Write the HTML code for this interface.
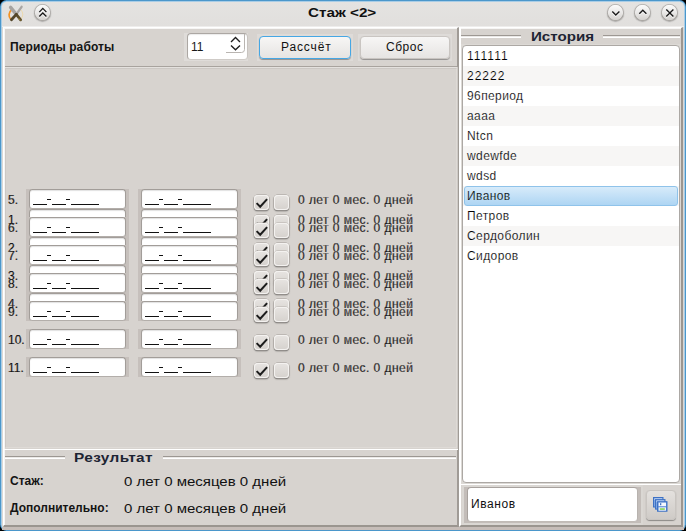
<!DOCTYPE html>
<html><head><meta charset="utf-8">
<style>
*{margin:0;padding:0;box-sizing:border-box}
html,body{width:686px;height:531px;overflow:hidden;background:#000}
body{position:relative;font-family:"Liberation Sans",sans-serif;font-size:12px;color:#111}
.a{position:absolute}
.t{position:absolute;white-space:nowrap;line-height:1}
#w0{left:0;top:0;width:686px;height:531px;border-radius:6.5px;background:#4b97cb}
#w1{left:1px;top:1px;width:684px;height:529px;border-radius:5.5px;background:#a9cde6}
#w2{left:2px;top:2px;width:682px;height:528px;border-radius:4.5px;background:linear-gradient(#e4e3e1,#e1dfdd 24px,#eeedec 24px,#eeedec 25px,#dcd8d4 25px)}
#wb{left:2px;top:527px;width:682px;height:3px;background:#c6bdb8}
.btnc{position:absolute;width:17px;height:17px;border-radius:50%;background:linear-gradient(#fdfdfd,#ecebea 45%,#d2cfcc);box-shadow:inset 0 0 0 0.8px rgba(110,105,100,.55),0 0.8px 1.2px rgba(0,0,0,.3)}
.btnc svg{position:absolute;left:0;top:0}
/* panels */
#lp{left:3px;top:27px;width:456px;height:500px;background:#d7d3cf;border-left:1px solid #fff;border-top:1px solid #fff;border-right:2px solid #a09b96;border-bottom:2px solid #9a958f;box-shadow:inset 1px 1px 0 #f6f5f4}
#rp{left:459px;top:27px;width:224px;height:500px;background:#d7d3cf;border-left:2px solid #fff;border-top:1px solid #fff;border-right:2px solid #9c9690;border-bottom:2px solid #9a958f;box-shadow:inset 0 1px 0 #f6f5f4}
.bold{font-weight:bold;color:#141414}
.dv{transform-origin:0 0}
.navy{color:#1d2433}
.pbtn{position:absolute;border-radius:4px;background:linear-gradient(#f7f6f5,#e6e4e2);box-shadow:0 1px 1px rgba(0,0,0,.35);border:1px solid #c9c5c1}
.fr{position:absolute;background:#c6c0bc}
.fld{position:absolute;background:#fff;border-radius:3.5px;border:1px solid #a29d99;border-bottom-color:#b3aeaa;box-shadow:inset 0 1px 1px rgba(0,0,0,.12)}
.cb{position:absolute;width:15px;height:15px;border-radius:4px;background:linear-gradient(#e7e4e1,#d5d1cd);box-shadow:inset 0 0 0 1px #f4f2f0,0 0 0 0.5px #b5b0ab,0 1px 1.5px rgba(0,0,0,.4)}
.cb svg{position:absolute;left:0;top:0}
.row .t{font-size:12px}
</style></head><body>
<div id="w0" class="a"></div>
<div id="w1" class="a"></div>
<div id="w2" class="a"></div>
<div id="wb" class="a"></div>

<!-- title bar -->
<svg class="a" style="left:4px;top:2px" width="24" height="22" viewBox="0 0 24 22">
  <path d="M7.4 8 A6.3 6.3 0 0 0 6.6 17" stroke="#f5880c" stroke-width="1.7" fill="none" opacity=".9"/>
  <path d="M17 8 A6.3 6.3 0 0 1 16.8 17" stroke="#f6d27a" stroke-width="1" fill="none" opacity=".5"/>
  <path d="M6.6 5.4 L12.3 12.4" stroke="#a6a3a0" stroke-width="3.4" stroke-linecap="round"/>
  <path d="M17.6 4.8 L12.3 12.4" stroke="#a9a6a3" stroke-width="2.3" stroke-linecap="round"/>
  <path d="M12.3 12.4 L16.6 17.8" stroke="#5e4e2a" stroke-width="2.8" stroke-linecap="round"/>
  <path d="M12.3 12.4 L7.4 17.8" stroke="#54462a" stroke-width="2.8" stroke-linecap="round"/>
  <path d="M14.6 16.4 L16.4 18.3" stroke="#c4a43c" stroke-width="1" opacity=".7"/>
</svg>
<div class="btnc" style="left:33.6px;top:4.1px"><svg width="17" height="17" viewBox="0 0 17 17"><path d="M5.3 8.1 L8.8 4.4 L12.4 8.1 M5.3 12.4 L8.8 8.9 L12.4 12.4" transform="translate(0,1.1)" stroke="#fff" stroke-opacity=".8" stroke-width="1.3" fill="none"/><path d="M5.3 8.1 L8.8 4.4 L12.4 8.1 M5.3 12.4 L8.8 8.9 L12.4 12.4" stroke="#1a1a1a" stroke-width="1.35" fill="none"/></svg></div>
<div class="t bold dv" style="left:308px;top:7px;font-size:12px;letter-spacing:0px;transform:scaleX(1.27);color:#111">Стаж &lt;2&gt;</div>
<div class="btnc" style="left:606.6px;top:4.1px"><svg width="17" height="17" viewBox="0 0 17 17"><path d="M5.3 7.6 L8.8 11.1 L12.4 7.6" transform="translate(0,1.1)" stroke="#fff" stroke-opacity=".8" stroke-width="1.3" fill="none"/><path d="M5.3 7.6 L8.8 11.1 L12.4 7.6" stroke="#1a1a1a" stroke-width="1.35" fill="none"/></svg></div>
<div class="btnc" style="left:633.6px;top:4.1px"><svg width="17" height="17" viewBox="0 0 17 17"><path d="M5.3 9.7 L8.8 6.2 L12.4 9.7" transform="translate(0,1.1)" stroke="#fff" stroke-opacity=".8" stroke-width="1.3" fill="none"/><path d="M5.3 9.7 L8.8 6.2 L12.4 9.7" stroke="#1a1a1a" stroke-width="1.35" fill="none"/></svg></div>
<div class="btnc" style="left:660.6px;top:4.1px"><svg width="17" height="17" viewBox="0 0 17 17"><path d="M5.3 5.4 L12.4 12.4 M12.4 5.4 L5.3 12.4" transform="translate(0,1.1)" stroke="#fff" stroke-opacity=".8" stroke-width="1.3" fill="none"/><path d="M5.3 5.4 L12.4 12.4 M12.4 5.4 L5.3 12.4" stroke="#1a1a1a" stroke-width="1.35" fill="none"/></svg></div>

<!-- left panel -->
<div id="lp" class="a"></div>
<div class="t bold" style="left:10px;top:41px;letter-spacing:0.1px">Периоды работы</div>

<!-- spinbox -->
<div class="a" style="left:184px;top:33px;width:64px;height:28px;background:#dfdcd9"></div>
<div class="a" style="left:187px;top:33px;width:61px;height:27px;background:#fff;border-radius:4px;border:1px solid #aca7a3;border-right-color:#c8c4c0;border-bottom-color:#cfcbc7;box-shadow:inset 0 1px 1px rgba(0,0,0,.08)"></div>
<div class="t" style="left:191px;top:41px;color:#1a1a1a">11</div>
<svg class="a" style="left:226px;top:33px" width="22" height="21" viewBox="0 0 22 21">
  <path d="M5 8.9 L9.5 4.4 L14 8.9 M5 12.5 L9.5 16.8 L14 12.5" stroke="#1d1d1d" stroke-width="1.35" fill="none"/>
  <path d="M0 19.5 H15.5 Q18.5 19.5 18.5 16.5 V1" stroke="#b9b5b1" stroke-width="1" fill="none"/>
</svg>

<!-- buttons -->
<div class="a" style="left:257px;top:34px;width:96px;height:27px;background:#dedbd8"></div>
<div class="pbtn" style="left:259px;top:36px;width:92px;height:23px;border:1.5px solid #46a7e4"></div>
<div class="t" style="left:281px;top:41px;letter-spacing:0.85px">Рассчёт</div>
<div class="a" style="left:358px;top:34px;width:94px;height:27px;background:#dedbd8"></div>
<div class="pbtn" style="left:360px;top:36px;width:90px;height:23px"></div>
<div class="t" style="left:386px;top:41px;letter-spacing:0.5px">Сброс</div>

<!-- separator -->
<div class="a" style="left:5px;top:66px;width:452px;height:1px;background:#a8a39e"></div>
<div class="a" style="left:5px;top:67px;width:452px;height:1px;background:#e4e1de"></div>

<!-- scroll area frame -->
<div class="a" style="left:5px;top:68px;width:452px;height:380px;border:1px solid #dedad6;border-left-color:#ccc8c4;border-top-color:#ccc8c4"></div>
<div class="a" style="left:457px;top:67px;width:1px;height:382px;background:#cdc9c5"></div>

<!-- ROWS -->
<div id="rows"></div>
<div class="t" style="left:8px;top:214px;color:#000;-webkit-text-stroke:0.2px #d7d3cf">1.</div>
<div class="fr" style="left:26px;top:209px;width:103px;height:20px"></div>
<div class="fld" style="left:29px;top:209px;width:97px;height:20px"></div>
<div class="a" style="left:33px;top:224px;width:14px;height:1px;background:#111"></div>
<div class="a" style="left:47px;top:219px;width:4px;height:1px;background:#111"></div>
<div class="a" style="left:52px;top:224px;width:14px;height:1px;background:#111"></div>
<div class="a" style="left:66px;top:219px;width:4px;height:1px;background:#111"></div>
<div class="a" style="left:71px;top:224px;width:28px;height:1px;background:#111"></div>
<div class="fr" style="left:138px;top:209px;width:103px;height:20px"></div>
<div class="fld" style="left:141px;top:209px;width:97px;height:20px"></div>
<div class="a" style="left:145px;top:224px;width:14px;height:1px;background:#111"></div>
<div class="a" style="left:159px;top:219px;width:4px;height:1px;background:#111"></div>
<div class="a" style="left:164px;top:224px;width:14px;height:1px;background:#111"></div>
<div class="a" style="left:178px;top:219px;width:4px;height:1px;background:#111"></div>
<div class="a" style="left:183px;top:224px;width:28px;height:1px;background:#111"></div>
<div class="cb" style="left:254px;top:215px"><svg width="16" height="16" viewBox="0 0 16 16"><path d="M2.6 8.1 L6.2 11.7 L13.1 4.1" stroke="#1d1d1d" stroke-width="2" fill="none"/></svg></div>
<div class="cb" style="left:274px;top:215px"></div>
<div class="t" style="left:298px;top:214px;letter-spacing:0.45px;color:#000;-webkit-text-stroke:0.25px #d7d3cf">0 лет 0 мес. 0 дней</div>
<div class="t" style="left:8px;top:242px;color:#000;-webkit-text-stroke:0.2px #d7d3cf">2.</div>
<div class="fr" style="left:26px;top:237px;width:103px;height:20px"></div>
<div class="fld" style="left:29px;top:237px;width:97px;height:20px"></div>
<div class="a" style="left:33px;top:252px;width:14px;height:1px;background:#111"></div>
<div class="a" style="left:47px;top:247px;width:4px;height:1px;background:#111"></div>
<div class="a" style="left:52px;top:252px;width:14px;height:1px;background:#111"></div>
<div class="a" style="left:66px;top:247px;width:4px;height:1px;background:#111"></div>
<div class="a" style="left:71px;top:252px;width:28px;height:1px;background:#111"></div>
<div class="fr" style="left:138px;top:237px;width:103px;height:20px"></div>
<div class="fld" style="left:141px;top:237px;width:97px;height:20px"></div>
<div class="a" style="left:145px;top:252px;width:14px;height:1px;background:#111"></div>
<div class="a" style="left:159px;top:247px;width:4px;height:1px;background:#111"></div>
<div class="a" style="left:164px;top:252px;width:14px;height:1px;background:#111"></div>
<div class="a" style="left:178px;top:247px;width:4px;height:1px;background:#111"></div>
<div class="a" style="left:183px;top:252px;width:28px;height:1px;background:#111"></div>
<div class="cb" style="left:254px;top:243px"><svg width="16" height="16" viewBox="0 0 16 16"><path d="M2.6 8.1 L6.2 11.7 L13.1 4.1" stroke="#1d1d1d" stroke-width="2" fill="none"/></svg></div>
<div class="cb" style="left:274px;top:243px"></div>
<div class="t" style="left:298px;top:242px;letter-spacing:0.45px;color:#000;-webkit-text-stroke:0.25px #d7d3cf">0 лет 0 мес. 0 дней</div>
<div class="t" style="left:8px;top:270px;color:#000;-webkit-text-stroke:0.2px #d7d3cf">3.</div>
<div class="fr" style="left:26px;top:265px;width:103px;height:20px"></div>
<div class="fld" style="left:29px;top:265px;width:97px;height:20px"></div>
<div class="a" style="left:33px;top:280px;width:14px;height:1px;background:#111"></div>
<div class="a" style="left:47px;top:275px;width:4px;height:1px;background:#111"></div>
<div class="a" style="left:52px;top:280px;width:14px;height:1px;background:#111"></div>
<div class="a" style="left:66px;top:275px;width:4px;height:1px;background:#111"></div>
<div class="a" style="left:71px;top:280px;width:28px;height:1px;background:#111"></div>
<div class="fr" style="left:138px;top:265px;width:103px;height:20px"></div>
<div class="fld" style="left:141px;top:265px;width:97px;height:20px"></div>
<div class="a" style="left:145px;top:280px;width:14px;height:1px;background:#111"></div>
<div class="a" style="left:159px;top:275px;width:4px;height:1px;background:#111"></div>
<div class="a" style="left:164px;top:280px;width:14px;height:1px;background:#111"></div>
<div class="a" style="left:178px;top:275px;width:4px;height:1px;background:#111"></div>
<div class="a" style="left:183px;top:280px;width:28px;height:1px;background:#111"></div>
<div class="cb" style="left:254px;top:271px"><svg width="16" height="16" viewBox="0 0 16 16"><path d="M2.6 8.1 L6.2 11.7 L13.1 4.1" stroke="#1d1d1d" stroke-width="2" fill="none"/></svg></div>
<div class="cb" style="left:274px;top:271px"></div>
<div class="t" style="left:298px;top:270px;letter-spacing:0.45px;color:#000;-webkit-text-stroke:0.25px #d7d3cf">0 лет 0 мес. 0 дней</div>
<div class="t" style="left:8px;top:298px;color:#000;-webkit-text-stroke:0.2px #d7d3cf">4.</div>
<div class="fr" style="left:26px;top:293px;width:103px;height:20px"></div>
<div class="fld" style="left:29px;top:293px;width:97px;height:20px"></div>
<div class="a" style="left:33px;top:308px;width:14px;height:1px;background:#111"></div>
<div class="a" style="left:47px;top:303px;width:4px;height:1px;background:#111"></div>
<div class="a" style="left:52px;top:308px;width:14px;height:1px;background:#111"></div>
<div class="a" style="left:66px;top:303px;width:4px;height:1px;background:#111"></div>
<div class="a" style="left:71px;top:308px;width:28px;height:1px;background:#111"></div>
<div class="fr" style="left:138px;top:293px;width:103px;height:20px"></div>
<div class="fld" style="left:141px;top:293px;width:97px;height:20px"></div>
<div class="a" style="left:145px;top:308px;width:14px;height:1px;background:#111"></div>
<div class="a" style="left:159px;top:303px;width:4px;height:1px;background:#111"></div>
<div class="a" style="left:164px;top:308px;width:14px;height:1px;background:#111"></div>
<div class="a" style="left:178px;top:303px;width:4px;height:1px;background:#111"></div>
<div class="a" style="left:183px;top:308px;width:28px;height:1px;background:#111"></div>
<div class="cb" style="left:254px;top:299px"><svg width="16" height="16" viewBox="0 0 16 16"><path d="M2.6 8.1 L6.2 11.7 L13.1 4.1" stroke="#1d1d1d" stroke-width="2" fill="none"/></svg></div>
<div class="cb" style="left:274px;top:299px"></div>
<div class="t" style="left:298px;top:298px;letter-spacing:0.45px;color:#000;-webkit-text-stroke:0.25px #d7d3cf">0 лет 0 мес. 0 дней</div>
<div class="t" style="left:8px;top:194px;color:#000;-webkit-text-stroke:0.2px #d7d3cf">5.</div>
<div class="fr" style="left:26px;top:189px;width:103px;height:20px"></div>
<div class="fld" style="left:29px;top:189px;width:97px;height:20px"></div>
<div class="a" style="left:33px;top:204px;width:14px;height:1px;background:#111"></div>
<div class="a" style="left:47px;top:199px;width:4px;height:1px;background:#111"></div>
<div class="a" style="left:52px;top:204px;width:14px;height:1px;background:#111"></div>
<div class="a" style="left:66px;top:199px;width:4px;height:1px;background:#111"></div>
<div class="a" style="left:71px;top:204px;width:28px;height:1px;background:#111"></div>
<div class="fr" style="left:138px;top:189px;width:103px;height:20px"></div>
<div class="fld" style="left:141px;top:189px;width:97px;height:20px"></div>
<div class="a" style="left:145px;top:204px;width:14px;height:1px;background:#111"></div>
<div class="a" style="left:159px;top:199px;width:4px;height:1px;background:#111"></div>
<div class="a" style="left:164px;top:204px;width:14px;height:1px;background:#111"></div>
<div class="a" style="left:178px;top:199px;width:4px;height:1px;background:#111"></div>
<div class="a" style="left:183px;top:204px;width:28px;height:1px;background:#111"></div>
<div class="cb" style="left:254px;top:195px"><svg width="16" height="16" viewBox="0 0 16 16"><path d="M2.6 8.1 L6.2 11.7 L13.1 4.1" stroke="#1d1d1d" stroke-width="2" fill="none"/></svg></div>
<div class="cb" style="left:274px;top:195px"></div>
<div class="t" style="left:298px;top:194px;letter-spacing:0.45px;color:#000;-webkit-text-stroke:0.25px #d7d3cf">0 лет 0 мес. 0 дней</div>
<div class="t" style="left:8px;top:222px;color:#000;-webkit-text-stroke:0.2px #d7d3cf">6.</div>
<div class="fr" style="left:26px;top:217px;width:103px;height:20px"></div>
<div class="fld" style="left:29px;top:217px;width:97px;height:20px"></div>
<div class="a" style="left:33px;top:232px;width:14px;height:1px;background:#111"></div>
<div class="a" style="left:47px;top:227px;width:4px;height:1px;background:#111"></div>
<div class="a" style="left:52px;top:232px;width:14px;height:1px;background:#111"></div>
<div class="a" style="left:66px;top:227px;width:4px;height:1px;background:#111"></div>
<div class="a" style="left:71px;top:232px;width:28px;height:1px;background:#111"></div>
<div class="fr" style="left:138px;top:217px;width:103px;height:20px"></div>
<div class="fld" style="left:141px;top:217px;width:97px;height:20px"></div>
<div class="a" style="left:145px;top:232px;width:14px;height:1px;background:#111"></div>
<div class="a" style="left:159px;top:227px;width:4px;height:1px;background:#111"></div>
<div class="a" style="left:164px;top:232px;width:14px;height:1px;background:#111"></div>
<div class="a" style="left:178px;top:227px;width:4px;height:1px;background:#111"></div>
<div class="a" style="left:183px;top:232px;width:28px;height:1px;background:#111"></div>
<div class="cb" style="left:254px;top:223px"><svg width="16" height="16" viewBox="0 0 16 16"><path d="M2.6 8.1 L6.2 11.7 L13.1 4.1" stroke="#1d1d1d" stroke-width="2" fill="none"/></svg></div>
<div class="cb" style="left:274px;top:223px"></div>
<div class="t" style="left:298px;top:222px;letter-spacing:0.45px;color:#000;-webkit-text-stroke:0.25px #d7d3cf">0 лет 0 мес. 0 дней</div>
<div class="t" style="left:8px;top:250px;color:#000;-webkit-text-stroke:0.2px #d7d3cf">7.</div>
<div class="fr" style="left:26px;top:245px;width:103px;height:20px"></div>
<div class="fld" style="left:29px;top:245px;width:97px;height:20px"></div>
<div class="a" style="left:33px;top:260px;width:14px;height:1px;background:#111"></div>
<div class="a" style="left:47px;top:255px;width:4px;height:1px;background:#111"></div>
<div class="a" style="left:52px;top:260px;width:14px;height:1px;background:#111"></div>
<div class="a" style="left:66px;top:255px;width:4px;height:1px;background:#111"></div>
<div class="a" style="left:71px;top:260px;width:28px;height:1px;background:#111"></div>
<div class="fr" style="left:138px;top:245px;width:103px;height:20px"></div>
<div class="fld" style="left:141px;top:245px;width:97px;height:20px"></div>
<div class="a" style="left:145px;top:260px;width:14px;height:1px;background:#111"></div>
<div class="a" style="left:159px;top:255px;width:4px;height:1px;background:#111"></div>
<div class="a" style="left:164px;top:260px;width:14px;height:1px;background:#111"></div>
<div class="a" style="left:178px;top:255px;width:4px;height:1px;background:#111"></div>
<div class="a" style="left:183px;top:260px;width:28px;height:1px;background:#111"></div>
<div class="cb" style="left:254px;top:251px"><svg width="16" height="16" viewBox="0 0 16 16"><path d="M2.6 8.1 L6.2 11.7 L13.1 4.1" stroke="#1d1d1d" stroke-width="2" fill="none"/></svg></div>
<div class="cb" style="left:274px;top:251px"></div>
<div class="t" style="left:298px;top:250px;letter-spacing:0.45px;color:#000;-webkit-text-stroke:0.25px #d7d3cf">0 лет 0 мес. 0 дней</div>
<div class="t" style="left:8px;top:278px;color:#000;-webkit-text-stroke:0.2px #d7d3cf">8.</div>
<div class="fr" style="left:26px;top:273px;width:103px;height:20px"></div>
<div class="fld" style="left:29px;top:273px;width:97px;height:20px"></div>
<div class="a" style="left:33px;top:288px;width:14px;height:1px;background:#111"></div>
<div class="a" style="left:47px;top:283px;width:4px;height:1px;background:#111"></div>
<div class="a" style="left:52px;top:288px;width:14px;height:1px;background:#111"></div>
<div class="a" style="left:66px;top:283px;width:4px;height:1px;background:#111"></div>
<div class="a" style="left:71px;top:288px;width:28px;height:1px;background:#111"></div>
<div class="fr" style="left:138px;top:273px;width:103px;height:20px"></div>
<div class="fld" style="left:141px;top:273px;width:97px;height:20px"></div>
<div class="a" style="left:145px;top:288px;width:14px;height:1px;background:#111"></div>
<div class="a" style="left:159px;top:283px;width:4px;height:1px;background:#111"></div>
<div class="a" style="left:164px;top:288px;width:14px;height:1px;background:#111"></div>
<div class="a" style="left:178px;top:283px;width:4px;height:1px;background:#111"></div>
<div class="a" style="left:183px;top:288px;width:28px;height:1px;background:#111"></div>
<div class="cb" style="left:254px;top:279px"><svg width="16" height="16" viewBox="0 0 16 16"><path d="M2.6 8.1 L6.2 11.7 L13.1 4.1" stroke="#1d1d1d" stroke-width="2" fill="none"/></svg></div>
<div class="cb" style="left:274px;top:279px"></div>
<div class="t" style="left:298px;top:278px;letter-spacing:0.45px;color:#000;-webkit-text-stroke:0.25px #d7d3cf">0 лет 0 мес. 0 дней</div>
<div class="t" style="left:8px;top:306px;color:#000;-webkit-text-stroke:0.2px #d7d3cf">9.</div>
<div class="fr" style="left:26px;top:301px;width:103px;height:20px"></div>
<div class="fld" style="left:29px;top:301px;width:97px;height:20px"></div>
<div class="a" style="left:33px;top:316px;width:14px;height:1px;background:#111"></div>
<div class="a" style="left:47px;top:311px;width:4px;height:1px;background:#111"></div>
<div class="a" style="left:52px;top:316px;width:14px;height:1px;background:#111"></div>
<div class="a" style="left:66px;top:311px;width:4px;height:1px;background:#111"></div>
<div class="a" style="left:71px;top:316px;width:28px;height:1px;background:#111"></div>
<div class="fr" style="left:138px;top:301px;width:103px;height:20px"></div>
<div class="fld" style="left:141px;top:301px;width:97px;height:20px"></div>
<div class="a" style="left:145px;top:316px;width:14px;height:1px;background:#111"></div>
<div class="a" style="left:159px;top:311px;width:4px;height:1px;background:#111"></div>
<div class="a" style="left:164px;top:316px;width:14px;height:1px;background:#111"></div>
<div class="a" style="left:178px;top:311px;width:4px;height:1px;background:#111"></div>
<div class="a" style="left:183px;top:316px;width:28px;height:1px;background:#111"></div>
<div class="cb" style="left:254px;top:307px"><svg width="16" height="16" viewBox="0 0 16 16"><path d="M2.6 8.1 L6.2 11.7 L13.1 4.1" stroke="#1d1d1d" stroke-width="2" fill="none"/></svg></div>
<div class="cb" style="left:274px;top:307px"></div>
<div class="t" style="left:298px;top:306px;letter-spacing:0.45px;color:#000;-webkit-text-stroke:0.25px #d7d3cf">0 лет 0 мес. 0 дней</div>
<div class="t" style="left:8px;top:334px;color:#000;-webkit-text-stroke:0.2px #d7d3cf">10.</div>
<div class="fr" style="left:26px;top:329px;width:103px;height:20px"></div>
<div class="fld" style="left:29px;top:329px;width:97px;height:20px"></div>
<div class="a" style="left:33px;top:344px;width:14px;height:1px;background:#111"></div>
<div class="a" style="left:47px;top:339px;width:4px;height:1px;background:#111"></div>
<div class="a" style="left:52px;top:344px;width:14px;height:1px;background:#111"></div>
<div class="a" style="left:66px;top:339px;width:4px;height:1px;background:#111"></div>
<div class="a" style="left:71px;top:344px;width:28px;height:1px;background:#111"></div>
<div class="fr" style="left:138px;top:329px;width:103px;height:20px"></div>
<div class="fld" style="left:141px;top:329px;width:97px;height:20px"></div>
<div class="a" style="left:145px;top:344px;width:14px;height:1px;background:#111"></div>
<div class="a" style="left:159px;top:339px;width:4px;height:1px;background:#111"></div>
<div class="a" style="left:164px;top:344px;width:14px;height:1px;background:#111"></div>
<div class="a" style="left:178px;top:339px;width:4px;height:1px;background:#111"></div>
<div class="a" style="left:183px;top:344px;width:28px;height:1px;background:#111"></div>
<div class="cb" style="left:254px;top:335px"><svg width="16" height="16" viewBox="0 0 16 16"><path d="M2.6 8.1 L6.2 11.7 L13.1 4.1" stroke="#1d1d1d" stroke-width="2" fill="none"/></svg></div>
<div class="cb" style="left:274px;top:335px"></div>
<div class="t" style="left:298px;top:334px;letter-spacing:0.45px;color:#000;-webkit-text-stroke:0.25px #d7d3cf">0 лет 0 мес. 0 дней</div>
<div class="t" style="left:8px;top:362px;color:#000;-webkit-text-stroke:0.2px #d7d3cf">11.</div>
<div class="fr" style="left:26px;top:357px;width:103px;height:20px"></div>
<div class="fld" style="left:29px;top:357px;width:97px;height:20px"></div>
<div class="a" style="left:33px;top:372px;width:14px;height:1px;background:#111"></div>
<div class="a" style="left:47px;top:367px;width:4px;height:1px;background:#111"></div>
<div class="a" style="left:52px;top:372px;width:14px;height:1px;background:#111"></div>
<div class="a" style="left:66px;top:367px;width:4px;height:1px;background:#111"></div>
<div class="a" style="left:71px;top:372px;width:28px;height:1px;background:#111"></div>
<div class="fr" style="left:138px;top:357px;width:103px;height:20px"></div>
<div class="fld" style="left:141px;top:357px;width:97px;height:20px"></div>
<div class="a" style="left:145px;top:372px;width:14px;height:1px;background:#111"></div>
<div class="a" style="left:159px;top:367px;width:4px;height:1px;background:#111"></div>
<div class="a" style="left:164px;top:372px;width:14px;height:1px;background:#111"></div>
<div class="a" style="left:178px;top:367px;width:4px;height:1px;background:#111"></div>
<div class="a" style="left:183px;top:372px;width:28px;height:1px;background:#111"></div>
<div class="cb" style="left:254px;top:363px"><svg width="16" height="16" viewBox="0 0 16 16"><path d="M2.6 8.1 L6.2 11.7 L13.1 4.1" stroke="#1d1d1d" stroke-width="2" fill="none"/></svg></div>
<div class="cb" style="left:274px;top:363px"></div>
<div class="t" style="left:298px;top:362px;letter-spacing:0.45px;color:#000;-webkit-text-stroke:0.25px #d7d3cf">0 лет 0 мес. 0 дней</div>
<!-- /ROWS -->

<div id="rows"></div>
<div class="t" style="left:8px;top:214px;color:#000;-webkit-text-stroke:0.2px #d7d3cf">1.</div>
<div class="fr" style="left:26px;top:209px;width:103px;height:20px"></div>
<div class="fld" style="left:29px;top:209px;width:97px;height:20px"></div>
<div class="a" style="left:33px;top:224px;width:14px;height:1px;background:#111"></div>
<div class="a" style="left:47px;top:219px;width:4px;height:1px;background:#111"></div>
<div class="a" style="left:52px;top:224px;width:14px;height:1px;background:#111"></div>
<div class="a" style="left:66px;top:219px;width:4px;height:1px;background:#111"></div>
<div class="a" style="left:71px;top:224px;width:28px;height:1px;background:#111"></div>
<div class="fr" style="left:138px;top:209px;width:103px;height:20px"></div>
<div class="fld" style="left:141px;top:209px;width:97px;height:20px"></div>
<div class="a" style="left:145px;top:224px;width:14px;height:1px;background:#111"></div>
<div class="a" style="left:159px;top:219px;width:4px;height:1px;background:#111"></div>
<div class="a" style="left:164px;top:224px;width:14px;height:1px;background:#111"></div>
<div class="a" style="left:178px;top:219px;width:4px;height:1px;background:#111"></div>
<div class="a" style="left:183px;top:224px;width:28px;height:1px;background:#111"></div>
<div class="cb" style="left:254px;top:215px"><svg width="16" height="16" viewBox="0 0 16 16"><path d="M2.6 8.1 L6.2 11.7 L13.1 4.1" stroke="#1d1d1d" stroke-width="2" fill="none"/></svg></div>
<div class="cb" style="left:274px;top:215px"></div>
<div class="t" style="left:298px;top:214px;letter-spacing:0.45px;color:#000;-webkit-text-stroke:0.25px #d7d3cf">0 лет 0 мес. 0 дней</div>
<div class="t" style="left:8px;top:242px;color:#000;-webkit-text-stroke:0.2px #d7d3cf">2.</div>
<div class="fr" style="left:26px;top:237px;width:103px;height:20px"></div>
<div class="fld" style="left:29px;top:237px;width:97px;height:20px"></div>
<div class="a" style="left:33px;top:252px;width:14px;height:1px;background:#111"></div>
<div class="a" style="left:47px;top:247px;width:4px;height:1px;background:#111"></div>
<div class="a" style="left:52px;top:252px;width:14px;height:1px;background:#111"></div>
<div class="a" style="left:66px;top:247px;width:4px;height:1px;background:#111"></div>
<div class="a" style="left:71px;top:252px;width:28px;height:1px;background:#111"></div>
<div class="fr" style="left:138px;top:237px;width:103px;height:20px"></div>
<div class="fld" style="left:141px;top:237px;width:97px;height:20px"></div>
<div class="a" style="left:145px;top:252px;width:14px;height:1px;background:#111"></div>
<div class="a" style="left:159px;top:247px;width:4px;height:1px;background:#111"></div>
<div class="a" style="left:164px;top:252px;width:14px;height:1px;background:#111"></div>
<div class="a" style="left:178px;top:247px;width:4px;height:1px;background:#111"></div>
<div class="a" style="left:183px;top:252px;width:28px;height:1px;background:#111"></div>
<div class="cb" style="left:254px;top:243px"><svg width="16" height="16" viewBox="0 0 16 16"><path d="M2.6 8.1 L6.2 11.7 L13.1 4.1" stroke="#1d1d1d" stroke-width="2" fill="none"/></svg></div>
<div class="cb" style="left:274px;top:243px"></div>
<div class="t" style="left:298px;top:242px;letter-spacing:0.45px;color:#000;-webkit-text-stroke:0.25px #d7d3cf">0 лет 0 мес. 0 дней</div>
<div class="t" style="left:8px;top:270px;color:#000;-webkit-text-stroke:0.2px #d7d3cf">3.</div>
<div class="fr" style="left:26px;top:265px;width:103px;height:20px"></div>
<div class="fld" style="left:29px;top:265px;width:97px;height:20px"></div>
<div class="a" style="left:33px;top:280px;width:14px;height:1px;background:#111"></div>
<div class="a" style="left:47px;top:275px;width:4px;height:1px;background:#111"></div>
<div class="a" style="left:52px;top:280px;width:14px;height:1px;background:#111"></div>
<div class="a" style="left:66px;top:275px;width:4px;height:1px;background:#111"></div>
<div class="a" style="left:71px;top:280px;width:28px;height:1px;background:#111"></div>
<div class="fr" style="left:138px;top:265px;width:103px;height:20px"></div>
<div class="fld" style="left:141px;top:265px;width:97px;height:20px"></div>
<div class="a" style="left:145px;top:280px;width:14px;height:1px;background:#111"></div>
<div class="a" style="left:159px;top:275px;width:4px;height:1px;background:#111"></div>
<div class="a" style="left:164px;top:280px;width:14px;height:1px;background:#111"></div>
<div class="a" style="left:178px;top:275px;width:4px;height:1px;background:#111"></div>
<div class="a" style="left:183px;top:280px;width:28px;height:1px;background:#111"></div>
<div class="cb" style="left:254px;top:271px"><svg width="16" height="16" viewBox="0 0 16 16"><path d="M2.6 8.1 L6.2 11.7 L13.1 4.1" stroke="#1d1d1d" stroke-width="2" fill="none"/></svg></div>
<div class="cb" style="left:274px;top:271px"></div>
<div class="t" style="left:298px;top:270px;letter-spacing:0.45px;color:#000;-webkit-text-stroke:0.25px #d7d3cf">0 лет 0 мес. 0 дней</div>
<div class="t" style="left:8px;top:298px;color:#000;-webkit-text-stroke:0.2px #d7d3cf">4.</div>
<div class="fr" style="left:26px;top:293px;width:103px;height:20px"></div>
<div class="fld" style="left:29px;top:293px;width:97px;height:20px"></div>
<div class="a" style="left:33px;top:308px;width:14px;height:1px;background:#111"></div>
<div class="a" style="left:47px;top:303px;width:4px;height:1px;background:#111"></div>
<div class="a" style="left:52px;top:308px;width:14px;height:1px;background:#111"></div>
<div class="a" style="left:66px;top:303px;width:4px;height:1px;background:#111"></div>
<div class="a" style="left:71px;top:308px;width:28px;height:1px;background:#111"></div>
<div class="fr" style="left:138px;top:293px;width:103px;height:20px"></div>
<div class="fld" style="left:141px;top:293px;width:97px;height:20px"></div>
<div class="a" style="left:145px;top:308px;width:14px;height:1px;background:#111"></div>
<div class="a" style="left:159px;top:303px;width:4px;height:1px;background:#111"></div>
<div class="a" style="left:164px;top:308px;width:14px;height:1px;background:#111"></div>
<div class="a" style="left:178px;top:303px;width:4px;height:1px;background:#111"></div>
<div class="a" style="left:183px;top:308px;width:28px;height:1px;background:#111"></div>
<div class="cb" style="left:254px;top:299px"><svg width="16" height="16" viewBox="0 0 16 16"><path d="M2.6 8.1 L6.2 11.7 L13.1 4.1" stroke="#1d1d1d" stroke-width="2" fill="none"/></svg></div>
<div class="cb" style="left:274px;top:299px"></div>
<div class="t" style="left:298px;top:298px;letter-spacing:0.45px;color:#000;-webkit-text-stroke:0.25px #d7d3cf">0 лет 0 мес. 0 дней</div>
<div class="t" style="left:8px;top:194px;color:#000;-webkit-text-stroke:0.2px #d7d3cf">5.</div>
<div class="fr" style="left:26px;top:189px;width:103px;height:20px"></div>
<div class="fld" style="left:29px;top:189px;width:97px;height:20px"></div>
<div class="a" style="left:33px;top:204px;width:14px;height:1px;background:#111"></div>
<div class="a" style="left:47px;top:199px;width:4px;height:1px;background:#111"></div>
<div class="a" style="left:52px;top:204px;width:14px;height:1px;background:#111"></div>
<div class="a" style="left:66px;top:199px;width:4px;height:1px;background:#111"></div>
<div class="a" style="left:71px;top:204px;width:28px;height:1px;background:#111"></div>
<div class="fr" style="left:138px;top:189px;width:103px;height:20px"></div>
<div class="fld" style="left:141px;top:189px;width:97px;height:20px"></div>
<div class="a" style="left:145px;top:204px;width:14px;height:1px;background:#111"></div>
<div class="a" style="left:159px;top:199px;width:4px;height:1px;background:#111"></div>
<div class="a" style="left:164px;top:204px;width:14px;height:1px;background:#111"></div>
<div class="a" style="left:178px;top:199px;width:4px;height:1px;background:#111"></div>
<div class="a" style="left:183px;top:204px;width:28px;height:1px;background:#111"></div>
<div class="cb" style="left:254px;top:195px"><svg width="16" height="16" viewBox="0 0 16 16"><path d="M2.6 8.1 L6.2 11.7 L13.1 4.1" stroke="#1d1d1d" stroke-width="2" fill="none"/></svg></div>
<div class="cb" style="left:274px;top:195px"></div>
<div class="t" style="left:298px;top:194px;letter-spacing:0.45px;color:#000;-webkit-text-stroke:0.25px #d7d3cf">0 лет 0 мес. 0 дней</div>
<div class="t" style="left:8px;top:222px;color:#000;-webkit-text-stroke:0.2px #d7d3cf">6.</div>
<div class="fr" style="left:26px;top:217px;width:103px;height:20px"></div>
<div class="fld" style="left:29px;top:217px;width:97px;height:20px"></div>
<div class="a" style="left:33px;top:232px;width:14px;height:1px;background:#111"></div>
<div class="a" style="left:47px;top:227px;width:4px;height:1px;background:#111"></div>
<div class="a" style="left:52px;top:232px;width:14px;height:1px;background:#111"></div>
<div class="a" style="left:66px;top:227px;width:4px;height:1px;background:#111"></div>
<div class="a" style="left:71px;top:232px;width:28px;height:1px;background:#111"></div>
<div class="fr" style="left:138px;top:217px;width:103px;height:20px"></div>
<div class="fld" style="left:141px;top:217px;width:97px;height:20px"></div>
<div class="a" style="left:145px;top:232px;width:14px;height:1px;background:#111"></div>
<div class="a" style="left:159px;top:227px;width:4px;height:1px;background:#111"></div>
<div class="a" style="left:164px;top:232px;width:14px;height:1px;background:#111"></div>
<div class="a" style="left:178px;top:227px;width:4px;height:1px;background:#111"></div>
<div class="a" style="left:183px;top:232px;width:28px;height:1px;background:#111"></div>
<div class="cb" style="left:254px;top:223px"><svg width="16" height="16" viewBox="0 0 16 16"><path d="M2.6 8.1 L6.2 11.7 L13.1 4.1" stroke="#1d1d1d" stroke-width="2" fill="none"/></svg></div>
<div class="cb" style="left:274px;top:223px"></div>
<div class="t" style="left:298px;top:222px;letter-spacing:0.45px;color:#000;-webkit-text-stroke:0.25px #d7d3cf">0 лет 0 мес. 0 дней</div>
<div class="t" style="left:8px;top:250px;color:#000;-webkit-text-stroke:0.2px #d7d3cf">7.</div>
<div class="fr" style="left:26px;top:245px;width:103px;height:20px"></div>
<div class="fld" style="left:29px;top:245px;width:97px;height:20px"></div>
<div class="a" style="left:33px;top:260px;width:14px;height:1px;background:#111"></div>
<div class="a" style="left:47px;top:255px;width:4px;height:1px;background:#111"></div>
<div class="a" style="left:52px;top:260px;width:14px;height:1px;background:#111"></div>
<div class="a" style="left:66px;top:255px;width:4px;height:1px;background:#111"></div>
<div class="a" style="left:71px;top:260px;width:28px;height:1px;background:#111"></div>
<div class="fr" style="left:138px;top:245px;width:103px;height:20px"></div>
<div class="fld" style="left:141px;top:245px;width:97px;height:20px"></div>
<div class="a" style="left:145px;top:260px;width:14px;height:1px;background:#111"></div>
<div class="a" style="left:159px;top:255px;width:4px;height:1px;background:#111"></div>
<div class="a" style="left:164px;top:260px;width:14px;height:1px;background:#111"></div>
<div class="a" style="left:178px;top:255px;width:4px;height:1px;background:#111"></div>
<div class="a" style="left:183px;top:260px;width:28px;height:1px;background:#111"></div>
<div class="cb" style="left:254px;top:251px"><svg width="16" height="16" viewBox="0 0 16 16"><path d="M2.6 8.1 L6.2 11.7 L13.1 4.1" stroke="#1d1d1d" stroke-width="2" fill="none"/></svg></div>
<div class="cb" style="left:274px;top:251px"></div>
<div class="t" style="left:298px;top:250px;letter-spacing:0.45px;color:#000;-webkit-text-stroke:0.25px #d7d3cf">0 лет 0 мес. 0 дней</div>
<div class="t" style="left:8px;top:278px;color:#000;-webkit-text-stroke:0.2px #d7d3cf">8.</div>
<div class="fr" style="left:26px;top:273px;width:103px;height:20px"></div>
<div class="fld" style="left:29px;top:273px;width:97px;height:20px"></div>
<div class="a" style="left:33px;top:288px;width:14px;height:1px;background:#111"></div>
<div class="a" style="left:47px;top:283px;width:4px;height:1px;background:#111"></div>
<div class="a" style="left:52px;top:288px;width:14px;height:1px;background:#111"></div>
<div class="a" style="left:66px;top:283px;width:4px;height:1px;background:#111"></div>
<div class="a" style="left:71px;top:288px;width:28px;height:1px;background:#111"></div>
<div class="fr" style="left:138px;top:273px;width:103px;height:20px"></div>
<div class="fld" style="left:141px;top:273px;width:97px;height:20px"></div>
<div class="a" style="left:145px;top:288px;width:14px;height:1px;background:#111"></div>
<div class="a" style="left:159px;top:283px;width:4px;height:1px;background:#111"></div>
<div class="a" style="left:164px;top:288px;width:14px;height:1px;background:#111"></div>
<div class="a" style="left:178px;top:283px;width:4px;height:1px;background:#111"></div>
<div class="a" style="left:183px;top:288px;width:28px;height:1px;background:#111"></div>
<div class="cb" style="left:254px;top:279px"><svg width="16" height="16" viewBox="0 0 16 16"><path d="M2.6 8.1 L6.2 11.7 L13.1 4.1" stroke="#1d1d1d" stroke-width="2" fill="none"/></svg></div>
<div class="cb" style="left:274px;top:279px"></div>
<div class="t" style="left:298px;top:278px;letter-spacing:0.45px;color:#000;-webkit-text-stroke:0.25px #d7d3cf">0 лет 0 мес. 0 дней</div>
<div class="t" style="left:8px;top:306px;color:#000;-webkit-text-stroke:0.2px #d7d3cf">9.</div>
<div class="fr" style="left:26px;top:301px;width:103px;height:20px"></div>
<div class="fld" style="left:29px;top:301px;width:97px;height:20px"></div>
<div class="a" style="left:33px;top:316px;width:14px;height:1px;background:#111"></div>
<div class="a" style="left:47px;top:311px;width:4px;height:1px;background:#111"></div>
<div class="a" style="left:52px;top:316px;width:14px;height:1px;background:#111"></div>
<div class="a" style="left:66px;top:311px;width:4px;height:1px;background:#111"></div>
<div class="a" style="left:71px;top:316px;width:28px;height:1px;background:#111"></div>
<div class="fr" style="left:138px;top:301px;width:103px;height:20px"></div>
<div class="fld" style="left:141px;top:301px;width:97px;height:20px"></div>
<div class="a" style="left:145px;top:316px;width:14px;height:1px;background:#111"></div>
<div class="a" style="left:159px;top:311px;width:4px;height:1px;background:#111"></div>
<div class="a" style="left:164px;top:316px;width:14px;height:1px;background:#111"></div>
<div class="a" style="left:178px;top:311px;width:4px;height:1px;background:#111"></div>
<div class="a" style="left:183px;top:316px;width:28px;height:1px;background:#111"></div>
<div class="cb" style="left:254px;top:307px"><svg width="16" height="16" viewBox="0 0 16 16"><path d="M2.6 8.1 L6.2 11.7 L13.1 4.1" stroke="#1d1d1d" stroke-width="2" fill="none"/></svg></div>
<div class="cb" style="left:274px;top:307px"></div>
<div class="t" style="left:298px;top:306px;letter-spacing:0.45px;color:#000;-webkit-text-stroke:0.25px #d7d3cf">0 лет 0 мес. 0 дней</div>
<div class="t" style="left:8px;top:334px;color:#000;-webkit-text-stroke:0.2px #d7d3cf">10.</div>
<div class="fr" style="left:26px;top:329px;width:103px;height:20px"></div>
<div class="fld" style="left:29px;top:329px;width:97px;height:20px"></div>
<div class="a" style="left:33px;top:344px;width:14px;height:1px;background:#111"></div>
<div class="a" style="left:47px;top:339px;width:4px;height:1px;background:#111"></div>
<div class="a" style="left:52px;top:344px;width:14px;height:1px;background:#111"></div>
<div class="a" style="left:66px;top:339px;width:4px;height:1px;background:#111"></div>
<div class="a" style="left:71px;top:344px;width:28px;height:1px;background:#111"></div>
<div class="fr" style="left:138px;top:329px;width:103px;height:20px"></div>
<div class="fld" style="left:141px;top:329px;width:97px;height:20px"></div>
<div class="a" style="left:145px;top:344px;width:14px;height:1px;background:#111"></div>
<div class="a" style="left:159px;top:339px;width:4px;height:1px;background:#111"></div>
<div class="a" style="left:164px;top:344px;width:14px;height:1px;background:#111"></div>
<div class="a" style="left:178px;top:339px;width:4px;height:1px;background:#111"></div>
<div class="a" style="left:183px;top:344px;width:28px;height:1px;background:#111"></div>
<div class="cb" style="left:254px;top:335px"><svg width="16" height="16" viewBox="0 0 16 16"><path d="M2.6 8.1 L6.2 11.7 L13.1 4.1" stroke="#1d1d1d" stroke-width="2" fill="none"/></svg></div>
<div class="cb" style="left:274px;top:335px"></div>
<div class="t" style="left:298px;top:334px;letter-spacing:0.45px;color:#000;-webkit-text-stroke:0.25px #d7d3cf">0 лет 0 мес. 0 дней</div>
<div class="t" style="left:8px;top:362px;color:#000;-webkit-text-stroke:0.2px #d7d3cf">11.</div>
<div class="fr" style="left:26px;top:357px;width:103px;height:20px"></div>
<div class="fld" style="left:29px;top:357px;width:97px;height:20px"></div>
<div class="a" style="left:33px;top:372px;width:14px;height:1px;background:#111"></div>
<div class="a" style="left:47px;top:367px;width:4px;height:1px;background:#111"></div>
<div class="a" style="left:52px;top:372px;width:14px;height:1px;background:#111"></div>
<div class="a" style="left:66px;top:367px;width:4px;height:1px;background:#111"></div>
<div class="a" style="left:71px;top:372px;width:28px;height:1px;background:#111"></div>
<div class="fr" style="left:138px;top:357px;width:103px;height:20px"></div>
<div class="fld" style="left:141px;top:357px;width:97px;height:20px"></div>
<div class="a" style="left:145px;top:372px;width:14px;height:1px;background:#111"></div>
<div class="a" style="left:159px;top:367px;width:4px;height:1px;background:#111"></div>
<div class="a" style="left:164px;top:372px;width:14px;height:1px;background:#111"></div>
<div class="a" style="left:178px;top:367px;width:4px;height:1px;background:#111"></div>
<div class="a" style="left:183px;top:372px;width:28px;height:1px;background:#111"></div>
<div class="cb" style="left:254px;top:363px"><svg width="16" height="16" viewBox="0 0 16 16"><path d="M2.6 8.1 L6.2 11.7 L13.1 4.1" stroke="#1d1d1d" stroke-width="2" fill="none"/></svg></div>
<div class="cb" style="left:274px;top:363px"></div>
<div class="t" style="left:298px;top:362px;letter-spacing:0.45px;color:#000;-webkit-text-stroke:0.25px #d7d3cf">0 лет 0 мес. 0 дней</div>
<!-- /ROWS -->

<!-- result group -->
<div class="a" style="left:3px;top:449px;width:455px;height:1px;background:#fff"></div>
<div class="a" style="left:5px;top:456px;width:60px;height:1px;background:#9c9792"></div>
<div class="a" style="left:5px;top:457px;width:60px;height:2px;background:linear-gradient(#ebe9e7 50%,#fff 50%)"></div>
<div class="a" style="left:163px;top:456px;width:293px;height:1px;background:#9c9792"></div>
<div class="a" style="left:163px;top:457px;width:293px;height:2px;background:linear-gradient(#ebe9e7 50%,#fff 50%)"></div>
<div class="t bold navy dv" style="left:74px;top:452px;letter-spacing:0.3px;transform:scaleX(1.28)">Результат</div>
<div class="t bold" style="left:10px;top:475px">Стаж:</div>
<div class="t dv" style="left:124px;top:476px;letter-spacing:0px;transform:scaleX(1.25)">0 лет 0 месяцев 0 дней</div>
<div class="t bold" style="left:10px;top:502px">Дополнительно:</div>
<div class="t dv" style="left:124px;top:503px;letter-spacing:0px;transform:scaleX(1.25)">0 лет 0 месяцев 0 дней</div>

<!-- right panel -->
<div id="rp" class="a"></div>
<div class="a" style="left:461px;top:35px;width:60px;height:1px;background:#9d9893"></div>
<div class="a" style="left:461px;top:36px;width:60px;height:2px;background:linear-gradient(#ebe9e7 50%,#fff 50%)"></div>
<div class="a" style="left:603px;top:35px;width:77px;height:1px;background:#9d9893"></div>
<div class="a" style="left:603px;top:36px;width:77px;height:2px;background:linear-gradient(#ebe9e7 50%,#fff 50%)"></div>
<div class="t bold navy dv" style="left:531px;top:31px;letter-spacing:0px;transform:scaleX(1.26)">История</div>

<div class="a" style="left:461px;top:44px;width:220px;height:440px;background:#dcd9d5"></div>
<div class="a" style="left:462px;top:45px;width:218px;height:438px;background:#fff;border-radius:4px;border:1px solid #aca8a4"></div>
<div class="a" style="left:461px;top:484px;width:220px;height:1px;background:#fff"></div>
<div id="list"></div>
<div class="t" style="left:467px;top:50px;letter-spacing:1.0px;color:#000;-webkit-text-stroke:0.15px #ffffff">111111</div>
<div class="a" style="left:463px;top:66px;width:216px;height:20px;background:#f7f6f5"></div>
<div class="t" style="left:467px;top:70px;letter-spacing:1.0px;color:#000;-webkit-text-stroke:0.15px #f7f6f5">22222</div>
<div class="t" style="left:467px;top:90px;letter-spacing:0.4px;color:#000;-webkit-text-stroke:0.15px #ffffff">96период</div>
<div class="a" style="left:463px;top:106px;width:216px;height:20px;background:#f7f6f5"></div>
<div class="t" style="left:467px;top:110px;letter-spacing:0.4px;color:#000;-webkit-text-stroke:0.15px #f7f6f5">аааа</div>
<div class="t" style="left:467px;top:130px;letter-spacing:0.4px;color:#000;-webkit-text-stroke:0.15px #ffffff">Ntcn</div>
<div class="a" style="left:463px;top:146px;width:216px;height:20px;background:#f7f6f5"></div>
<div class="t" style="left:467px;top:150px;letter-spacing:0.4px;color:#000;-webkit-text-stroke:0.15px #f7f6f5">wdewfde</div>
<div class="t" style="left:467px;top:170px;letter-spacing:0.4px;color:#000;-webkit-text-stroke:0.15px #ffffff">wdsd</div>
<div class="a" style="left:463px;top:186px;width:216px;height:20px;background:#f7f6f5"></div>
<div class="a" style="left:464px;top:186px;width:214px;height:20px;border-radius:3px;border:1px solid #8fc3ea;background:linear-gradient(#d7ebfa,#aed5f3)"></div>
<div class="t" style="left:467px;top:190px;letter-spacing:0.4px;color:#000;-webkit-text-stroke:0.15px #c4e2f7">Иванов</div>
<div class="t" style="left:467px;top:210px;letter-spacing:0.4px;color:#000;-webkit-text-stroke:0.15px #ffffff">Петров</div>
<div class="a" style="left:463px;top:226px;width:216px;height:20px;background:#f7f6f5"></div>
<div class="t" style="left:467px;top:230px;letter-spacing:0.4px;color:#000;-webkit-text-stroke:0.15px #f7f6f5">Сердоболин</div>
<div class="t" style="left:467px;top:250px;letter-spacing:0.4px;color:#000;-webkit-text-stroke:0.15px #ffffff">Сидоров</div>
<!-- /LIST -->

<div class="a" style="left:462px;top:485px;width:181px;height:40px;background:#dad7d3"></div>
<div class="a" style="left:464px;top:487px;width:177px;height:36px;background:#c3bdb9"></div>
<div class="a" style="left:467px;top:487px;width:171px;height:35px;background:#fff;border-radius:4px;border:1px solid #a8a29e;border-right-color:#b8b3af;border-bottom-color:#c0bbb6"></div>
<div class="t" style="left:471px;top:498px;letter-spacing:0.6px">Иванов</div>
<div class="pbtn" style="left:646px;top:490px;width:30px;height:30px;background:linear-gradient(#e4e1de,#cfcbc7)"></div>
<svg class="a" style="left:648px;top:492px" width="24" height="24" viewBox="0 0 24 24">
  <g stroke="#3f72c4" stroke-width="1">
  <rect x="5.5" y="5.5" width="9.5" height="9.5" fill="#7ea6e2"/>
  <rect x="6.6" y="6.6" width="7.5" height="1.4" fill="#e8f0fb" stroke="none"/>
  <rect x="7.5" y="7.6" width="9.5" height="9.5" fill="#7ea6e2"/>
  <rect x="8.6" y="8.7" width="7.5" height="1.4" fill="#e8f0fb" stroke="none"/>
  <rect x="9.5" y="9.7" width="9.5" height="9.5" fill="#5a8ad6"/>
  </g>
  <rect x="10.6" y="10.6" width="7.4" height="3.6" fill="#f4f8fd"/>
  <rect x="12" y="11.2" width="1.3" height="2" fill="#3f72c4"/>
  <rect x="10.6" y="15.3" width="7.4" height="3.4" fill="#eef3fa"/>
  <rect x="11.8" y="16.3" width="5" height="1.5" fill="#7fd248"/>
</svg>

</body></html>
